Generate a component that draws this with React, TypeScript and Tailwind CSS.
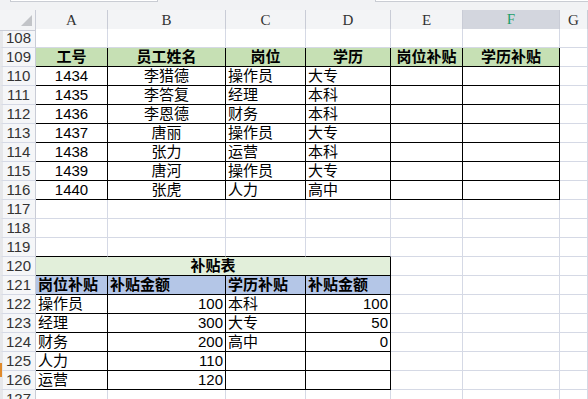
import React from 'react'

type Cell = {
  t?: string
  a?: 'l' | 'c' | 'r'
  b?: boolean
  bg?: string
  r?: boolean
  d?: boolean
  span?: number
}

const COLS = ['A', 'B', 'C', 'D', 'E', 'F', 'G']
const GREEN = 'bg-[#c6e0b4]'
const PALE = 'bg-[#e2efda]'
const BLUE = 'bg-[#b4c6e7]'

const empty = (n: number): Cell[] => Array.from({ length: n }, () => ({}))

const staff = [
  ['1434', '李猎德', '操作员', '大专'],
  ['1435', '李答复', '经理', '本科'],
  ['1436', '李恩德', '财务', '本科'],
  ['1437', '唐丽', '操作员', '大专'],
  ['1438', '张力', '运营', '本科'],
  ['1439', '唐河', '操作员', '大专'],
  ['1440', '张虎', '人力', '高中'],
]

const allowance = [
  ['操作员', '100', '本科', '100'],
  ['经理', '300', '大专', '50'],
  ['财务', '200', '高中', '0'],
  ['人力', '110', '', ''],
  ['运营', '120', '', ''],
]

const rows: { n: number; cells: Cell[] }[] = [
  { n: 108, cells: empty(7) },
  {
    n: 109,
    cells: [
      ...['工号', '员工姓名', '岗位', '学历', '岗位补贴', '学历补贴'].map(
        (t): Cell => ({ t, a: 'c', b: true, bg: GREEN, r: true, d: true }),
      ),
      {},
    ],
  },
  ...staff.map((s, i) => ({
    n: 110 + i,
    cells: [
      { t: s[0], a: 'c', r: true, d: true },
      { t: s[1], a: 'c', r: true, d: true },
      { t: s[2], a: 'l', r: true, d: true },
      { t: s[3], a: 'l', r: true, d: true },
      { r: true, d: true },
      { r: true, d: true },
      {},
    ] as Cell[],
  })),
  { n: 117, cells: empty(7) },
  { n: 118, cells: empty(7) },
  { n: 119, cells: [{ d: true }, { d: true }, { d: true }, { d: true }, {}, {}, {}] },
  {
    n: 120,
    cells: [{ t: '补贴表', a: 'c', b: true, bg: PALE, r: true, d: true, span: 4 }, {}, {}, {}],
  },
  {
    n: 121,
    cells: [
      ...['岗位补贴', '补贴金额', '学历补贴', '补贴金额'].map(
        (t): Cell => ({ t, a: 'l', b: true, bg: BLUE, r: true, d: true }),
      ),
      {},
      {},
      {},
    ],
  },
  ...allowance.map((s, i) => ({
    n: 122 + i,
    cells: [
      { t: s[0], a: 'l', r: true, d: true },
      { t: s[1], a: 'r', r: true, d: true },
      { t: s[2], a: 'l', r: true, d: true },
      { t: s[3], a: 'r', r: true, d: true },
      {},
      {},
      {},
    ] as Cell[],
  })),
  { n: 127, cells: empty(7) },
]

const grid = 'grid grid-cols-[36px_72px_118px_80px_85px_72px_97px_1fr]'

function DataCell({ c }: { c: Cell }) {
  const align = c.a === 'c' ? 'justify-center' : c.a === 'r' ? 'justify-end' : 'justify-start'
  return (
    <div
      className={[
        'flex h-[19px] items-center overflow-visible whitespace-nowrap border-r border-b px-[2px] text-[15px] leading-[18px] text-black',
        align,
        c.r ? 'border-r-black' : 'border-r-[#d5d9e5]',
        c.d ? 'border-b-black' : 'border-b-[#d5d9e5]',
        c.b ? 'font-bold' : 'font-normal',
        c.bg ?? 'bg-white',
        c.span === 4 ? 'col-span-4' : '',
      ].join(' ')}
    >
      {c.t}
    </div>
  )
}

export default function App() {
  return (
    <div
      className="relative h-[399px] w-[588px] overflow-hidden bg-white"
      style={{ fontFamily: '"Liberation Sans", "Noto Sans CJK SC", sans-serif' }}
    >
      {/* formula bar remnant */}
      <div className="flex h-[10px] items-start bg-[#f1f2f4]">
        <div className="ml-[10px] h-[2px] w-[148px] border-x border-b border-[#c9ccd3] bg-white" />
        <div className="ml-auto h-[2px] w-[213px] border-l border-b border-[#c9ccd3] bg-white" />
      </div>

      {/* column header */}
      <div className={grid + ' h-[19px]'}>
        <div className="relative border-r border-b border-[#c9ccd6] bg-[#f3f4f6]">
          <svg className="absolute left-[21px] top-[5px]" width="11" height="11" viewBox="0 0 11 11">
            <polygon points="11,0 11,11 0,11" fill="#c2c4c8" />
          </svg>
        </div>
        {COLS.map((c) =>
          c === 'F' ? (
            <div
              key={c}
              className="flex items-center justify-center border-r border-r-[#c9ccd6] border-b-2 border-b-[#21a366] bg-[#d3d6de] pb-[1px] text-[15px] leading-[18px] text-[#1e9e6a]"
              style={{ fontFamily: '"Liberation Serif", serif' }}
            >
              {c}
            </div>
          ) : (
            <div
              key={c}
              className="flex items-center justify-center border-r border-b border-[#c9ccd6] bg-[#f3f4f6] text-[15px] leading-[18px] text-[#333]"
              style={{ fontFamily: '"Liberation Serif", serif' }}
            >
              {c}
            </div>
          ),
        )}
      </div>

      {rows.map((row) => (
        <div key={row.n} className={grid + ' h-[19px]'}>
          <div className="flex items-center justify-center border-l-[3px] border-l-[#e6e7ea] border-r border-b border-r-[#c9ccd6] border-b-[#d5d9e5] bg-[#f5f6f8] pr-[1px] text-[15px] leading-[18px] text-[#333]">
            {row.n}
          </div>
          {row.cells.map((c, i) => (
            <DataCell key={i} c={c} />
          ))}
        </div>
      ))}

      <div className="absolute left-0 top-[363px] h-[14px] w-[2px] bg-[#e08a2c]" />
    </div>
  )
}
